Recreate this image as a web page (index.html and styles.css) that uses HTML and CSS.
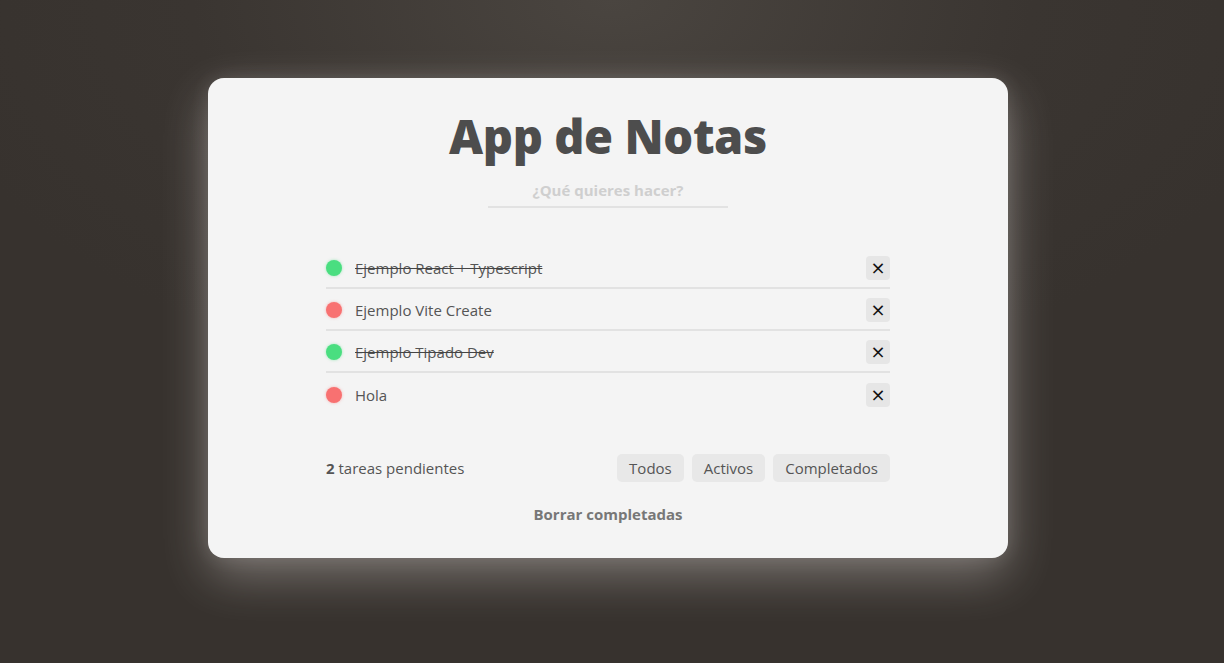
FILE: index.html
```html
<!DOCTYPE html>
<html lang="es">
<head>
<meta charset="utf-8">
<title>App de Notas</title>
<link rel="stylesheet" href="styles.css">
</head>
<body>
<main class="card">
  <h1 class="title">App de Notas</h1>
  <input class="new-todo" type="text" placeholder="¿Qué quieres hacer?">
  <ul class="todo-list">
    <li class="todo done">
      <span class="dot green"></span>
      <span class="label">Ejemplo React + Typescript</span>
      <button class="remove">×</button>
    </li>
    <li class="todo">
      <span class="dot red"></span>
      <span class="label">Ejemplo Vite Create</span>
      <button class="remove">×</button>
    </li>
    <li class="todo done">
      <span class="dot green"></span>
      <span class="label">Ejemplo Tipado Dev</span>
      <button class="remove">×</button>
    </li>
    <li class="todo">
      <span class="dot red"></span>
      <span class="label">Hola</span>
      <button class="remove">×</button>
    </li>
  </ul>
  <footer class="footer">
    <span class="count"><strong>2</strong> tareas pendientes</span>
    <div class="filters">
      <button class="filter">Todos</button>
      <button class="filter">Activos</button>
      <button class="filter">Completados</button>
    </div>
  </footer>
  <button class="clear">Borrar completadas</button>
</main>
</body>
</html>
```
FILE: styles.css
```css
* { box-sizing: border-box; }
html, body { height: 100%; }
body {
  margin: 0;
  font-family: "Open Sans", "Noto Sans", sans-serif;
  background: radial-gradient(ellipse 700px 400px at 50% 0%, #4a4540 0%, #3a3531 60%, #37322e 100%);
  background-color: #37322e;
  display: flex;
  justify-content: center;
  align-items: flex-start;
  padding: 78px 8px 0 0;
}
.card {
  width: 800px;
  height: 480px;
  background: #f4f4f4;
  border-radius: 16px;
  box-shadow: 0 18px 48px rgba(255, 250, 245, 0.32), 0 0 20px rgba(255, 250, 245, 0.12);
  display: flex;
  flex-direction: column;
  align-items: center;
  padding: 26px 118px 0;
}
.title {
  margin: 0;
  font-size: 47px;
  font-weight: 800;
  color: #4d4d4d;
  line-height: 64px;
  letter-spacing: -0.4px;
}
.new-todo {
  margin-top: 10px;
  width: 240px;
  border: none;
  border-bottom: 2px solid #e2e2e2;
  background: transparent;
  text-align: center;
  font-family: inherit;
  font-size: 15px;
  font-weight: 700;
  padding: 2px 0 6px;
  outline: none;
  color: #555;
}
.new-todo::placeholder { color: #cfcfcf; }
.todo-list {
  list-style: none;
  margin: 39px 0 0;
  padding: 0;
  width: 564px;
}
.todo {
  display: flex;
  align-items: center;
  height: 42px;
  border-bottom: 2px solid #e2e2e2;
  padding-top: 2px;
}
.todo:last-child { border-bottom: none; }
.dot {
  width: 16px;
  height: 16px;
  border-radius: 50%;
  flex: none;
}
.dot.green { background: #4ade80; box-shadow: 0 0 3px rgba(74, 222, 128, 0.5); }
.dot.red { background: #f87171; box-shadow: 0 0 3px rgba(248, 113, 113, 0.5); }
.label {
  flex: 1;
  margin-left: 13px;
  font-size: 15px;
  color: #555;
}
.done .label { text-decoration: line-through; text-decoration-color: #444; }
.remove {
  width: 24px;
  height: 24px;
  border: none;
  border-radius: 4px;
  background: #e6e6e6;
  color: #111;
  font-family: "DejaVu Sans", sans-serif;
  font-size: 18px;
  line-height: 24px;
  padding: 0;
  cursor: pointer;
}
.footer {
  margin-top: 39px;
  width: 564px;
  display: flex;
  justify-content: space-between;
  align-items: center;
}
.count { font-size: 15px; color: #555; }
.count strong { font-weight: 700; }
.filters { display: flex; gap: 8px; }
.filter {
  border: none;
  background: #e8e8e8;
  border-radius: 5px;
  font-family: inherit;
  font-size: 15px;
  color: #555;
  height: 28px;
  padding: 0 12px;
  cursor: pointer;
}
.clear {
  margin-top: 22px;
  border: none;
  background: transparent;
  font-family: inherit;
  font-size: 15px;
  font-weight: 700;
  color: #777;
  cursor: pointer;
  padding: 0;
}
```
